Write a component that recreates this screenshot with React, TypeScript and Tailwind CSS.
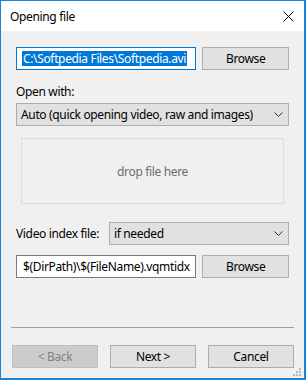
import React from 'react';

// Win10-style wizard dialog: "Opening file"
const font = { fontFamily: '"Noto Sans", "Liberation Sans", sans-serif' };

const Chevron = () => (
  <svg width="9" height="5" viewBox="0 0 9 5" className="shrink-0">
    <path d="M0.5 0.5 L4.5 4.5 L8.5 0.5" fill="none" stroke="#333" strokeWidth="1" />
  </svg>
);

const Button = ({ label, disabled = false, className = '' }: { label: string; disabled?: boolean; className?: string }) => (
  <button
    disabled={disabled}
    className={
      disabled
        ? `h-[23px] border border-[#bfbfbf] bg-[#cccccc] text-[#838383] text-[12px] ${className}`
        : `h-[23px] border border-[#adadad] bg-[#e1e1e1] text-black text-[12px] ${className}`
    }
  >
    {label}
  </button>
);

const App = () => {
  return (
    <div
      style={font}
      className="w-[306px] h-[380px] border border-[#1883d7] border-r-2 border-b-2 flex flex-col bg-[#f0f0f0] text-[12px] leading-[15px] tracking-[-0.35px] text-black"
    >
      {/* title bar */}
      <div className="h-[30px] bg-white flex items-center justify-between pl-[9px] pr-[10px] shrink-0">
        <span className="text-[12px]">Opening file</span>
        <svg width="11" height="11" viewBox="0 0 11 11">
          <path d="M0.5 0.5 L10.5 10.5 M10.5 0.5 L0.5 10.5" stroke="#000" strokeWidth="1" />
        </svg>
      </div>

      <div className="flex-1 flex flex-col relative">
        <div className="px-[15px] pt-[16px] flex flex-col">
          {/* file path row */}
          <div className="flex gap-[6px]">
            <div className="w-[181px] h-[23px] border border-[#0078d7] bg-white flex items-center pl-[5px]">
              <span className="bg-[#0078d7] text-white px-[1px] whitespace-nowrap">C:\Softpedia Files\Softpedia.avi</span>
            </div>
            <Button label="Browse" className="w-[87px]" />
          </div>

          <div className="mt-[14px] h-[15px] leading-[15px]">Open with:</div>

          <div className="mt-[4px] h-[23px] border border-[#adadad] bg-[#e1e1e1] flex items-center justify-between pl-[4px] pr-[5px]">
            <span className="whitespace-nowrap">Auto (quick opening video, raw and images)</span>
            <Chevron />
          </div>

          {/* drop area */}
          <div className="mx-[5px] mt-[12px] h-[66px] border border-[#dcdcdc] flex items-center justify-center text-[#6d6d6d]">
            drop file here
          </div>

          {/* video index */}
          <div className="mt-[18px] flex items-center">
            <span className="w-[93px] whitespace-nowrap">Video index file:</span>
            <div className="flex-1 h-[23px] border border-[#adadad] bg-[#e1e1e1] flex items-center justify-between pl-[4px] pr-[5px]">
              <span>if needed</span>
              <Chevron />
            </div>
          </div>

          <div className="mt-[10px] flex gap-[6px]">
            <div className="w-[181px] h-[23px] border border-[#7a7a7a] bg-white flex items-center pl-[6px]">
              <span className="whitespace-nowrap">$(DirPath)\$(FileName).vqmtidx</span>
            </div>
            <Button label="Browse" className="w-[87px]" />
          </div>
        </div>

        <div className="mt-auto ml-[10px] mr-[10px] h-px bg-[#a0a0a0]" />

        <div className="mt-[17px] mb-[10px] flex justify-end gap-[12px] pr-[10px]">
          <Button label="< Back" disabled className="w-[86px]" />
          <Button label="Next >" className="w-[86px]" />
          <Button label="Cancel" className="w-[86px]" />
        </div>

        {/* size grip */}
        <svg width="9" height="9" viewBox="0 0 9 9" className="absolute right-[2px] bottom-[1px]">
          <rect x="6" y="0" width="2" height="2" fill="#b8b8b8" />
          <rect x="3" y="3" width="2" height="2" fill="#b8b8b8" />
          <rect x="6" y="3" width="2" height="2" fill="#b8b8b8" />
          <rect x="0" y="6" width="2" height="2" fill="#b8b8b8" />
          <rect x="3" y="6" width="2" height="2" fill="#b8b8b8" />
          <rect x="6" y="6" width="2" height="2" fill="#b8b8b8" />
        </svg>
      </div>
    </div>
  );
};

export default App;
